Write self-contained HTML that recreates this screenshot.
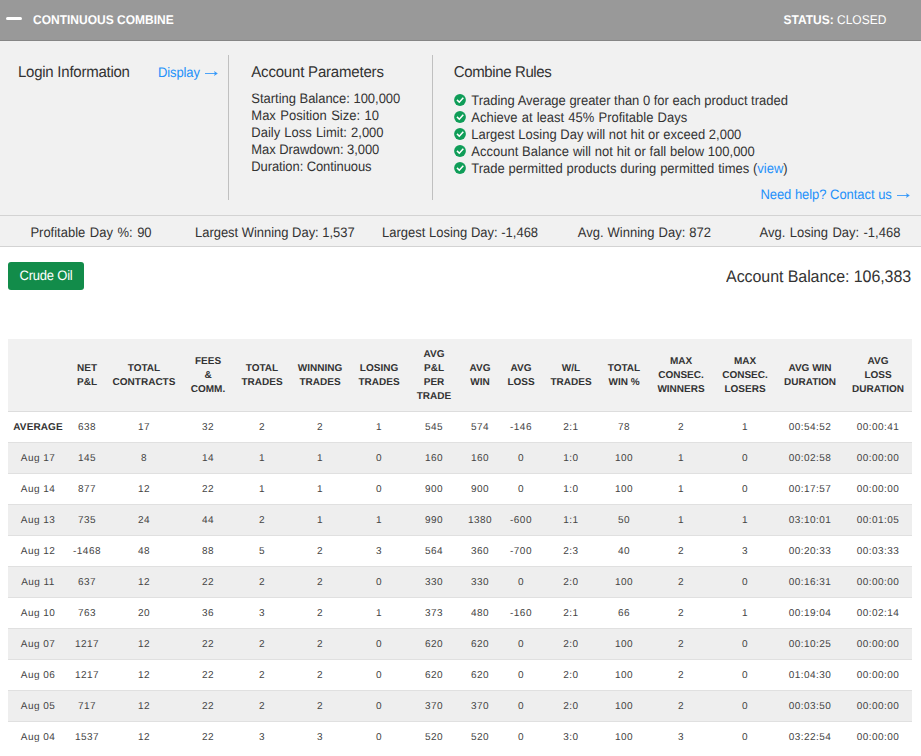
<!DOCTYPE html>
<html>
<head>
<meta charset="utf-8">
<style>
*{box-sizing:border-box;margin:0;padding:0}
html,body{width:921px;height:756px;overflow:hidden;background:#fff}
body{font-family:"Liberation Sans",sans-serif;color:#333;position:relative;font-size:13px;text-rendering:geometricPrecision}
.ln{position:absolute;white-space:nowrap;line-height:20px}
#hdr{position:absolute;left:0;top:0;width:921px;height:41px;background:#999;border-bottom:1px solid #868686}
#minus{position:absolute;left:6px;top:16.7px;width:16.4px;height:3.4px;background:#fff;border-radius:1.7px}
#info{position:absolute;left:0;top:41px;width:921px;height:206px;background:#f1f1f1;border-bottom:1px solid #d3d3d3}
#sep{position:absolute;left:0;top:215px;width:921px;height:1px;background:#d3d3d3}
.vline{position:absolute;top:55px;width:1px;height:145px;background:#c0c0c0}
.chk{position:absolute;left:454px;width:12px;height:12px}
.arr{position:absolute}
#btn{position:absolute;left:8px;top:262px;width:76px;height:28px;background:#128c4a;border-radius:3px}
table{position:absolute;left:8px;top:339px;width:904px;border-collapse:collapse;table-layout:fixed}
th{font-size:10px;font-weight:bold;line-height:14px;letter-spacing:0px;color:#333;text-align:center;vertical-align:middle;background:#f1f1f1;height:72px;padding:2px 0 0;border-bottom:1px solid #ddd}
td{font-size:10px;letter-spacing:0.45px;color:#444;text-align:center;vertical-align:middle;height:31px;padding:2px 0 0;border-bottom:1px solid #e0e0e0;white-space:nowrap;line-height:14px}
tr.g td{background:#eee}

td.b{font-weight:bold;font-size:10px;letter-spacing:.1px;color:#333}
tr:last-child td{border-bottom:0}
</style>
</head>
<body>
<div id="hdr"><div id="minus"></div></div>
<div id="info"></div><div id="sep"></div>
<div class="vline" style="left:228px"></div><div class="vline" style="left:432px"></div>
<div id="btn"></div>
<div id="title" class="ln" style="left:33.00px;top:9.84px;font-size:12px;font-weight:bold;color:#fff;letter-spacing:0.000px;word-spacing:0.000px;transform:scaleY(1.06);transform-origin:0 14.16px">CONTINUOUS COMBINE</div>
<div id="status" class="ln" style="left:783.45px;top:9.84px;font-size:12px;font-weight:normal;color:#fff;letter-spacing:0.000px;word-spacing:0.000px;transform:scaleY(1.06);transform-origin:0 14.16px"><b>STATUS:</b> CLOSED</div>
<div id="login" class="ln" style="left:18.00px;top:62.80px;font-size:15px;font-weight:normal;color:#333;letter-spacing:-0.250px;word-spacing:0.000px;transform:scaleY(1.04);transform-origin:0 15.20px">Login Information</div>
<div id="display" class="ln" style="left:158.00px;top:62.50px;font-size:13px;font-weight:normal;color:#2390fa;letter-spacing:-0.117px;word-spacing:0.000px;transform:scaleY(1.06);transform-origin:0 14.50px">Display</div>
<div id="ap" class="ln" style="left:251.30px;top:62.80px;font-size:15px;font-weight:normal;color:#333;letter-spacing:-0.194px;word-spacing:0.000px;transform:scaleY(1.04);transform-origin:0 15.20px">Account Parameters</div>
<div id="ap1" class="ln" style="left:251.30px;top:88.50px;font-size:13px;font-weight:normal;color:#333;letter-spacing:-0.025px;word-spacing:0.000px;transform:scaleY(1.06);transform-origin:0 14.50px">Starting Balance: 100,000</div>
<div id="ap2" class="ln" style="left:251.30px;top:105.50px;font-size:13px;font-weight:normal;color:#333;letter-spacing:0.000px;word-spacing:0.900px;transform:scaleY(1.06);transform-origin:0 14.50px">Max Position Size: 10</div>
<div id="ap3" class="ln" style="left:251.30px;top:122.50px;font-size:13px;font-weight:normal;color:#333;letter-spacing:0.000px;word-spacing:0.500px;transform:scaleY(1.06);transform-origin:0 14.50px">Daily Loss Limit: 2,000</div>
<div id="ap4" class="ln" style="left:251.30px;top:139.50px;font-size:13px;font-weight:normal;color:#333;letter-spacing:-0.072px;word-spacing:0.000px;transform:scaleY(1.06);transform-origin:0 14.50px">Max Drawdown: 3,000</div>
<div id="ap5" class="ln" style="left:251.30px;top:156.50px;font-size:13px;font-weight:normal;color:#333;letter-spacing:-0.100px;word-spacing:0.000px;transform:scaleY(1.06);transform-origin:0 14.50px">Duration: Continuous</div>
<div id="cr" class="ln" style="left:453.80px;top:62.80px;font-size:15px;font-weight:normal;color:#333;letter-spacing:-0.383px;word-spacing:0.000px;transform:scaleY(1.04);transform-origin:0 15.20px">Combine Rules</div>
<div id="r1" class="ln" style="left:471.30px;top:90.50px;font-size:13px;font-weight:normal;color:#333;letter-spacing:-0.013px;word-spacing:0.000px;transform:scaleY(1.06);transform-origin:0 14.50px">Trading Average greater than 0 for each product traded</div>
<div id="r2" class="ln" style="left:471.30px;top:107.50px;font-size:13px;font-weight:normal;color:#333;letter-spacing:0.000px;word-spacing:0.540px;transform:scaleY(1.06);transform-origin:0 14.50px">Achieve at least 45% Profitable Days</div>
<div id="r3" class="ln" style="left:471.30px;top:124.50px;font-size:13px;font-weight:normal;color:#333;letter-spacing:0.000px;word-spacing:0.062px;transform:scaleY(1.06);transform-origin:0 14.50px">Largest Losing Day will not hit or exceed 2,000</div>
<div id="r4" class="ln" style="left:471.30px;top:141.50px;font-size:13px;font-weight:normal;color:#333;letter-spacing:0.000px;word-spacing:0.212px;transform:scaleY(1.06);transform-origin:0 14.50px">Account Balance will not hit or fall below 100,000</div>
<div id="r5" class="ln" style="left:471.30px;top:158.50px;font-size:13px;font-weight:normal;color:#333;letter-spacing:0.000px;word-spacing:0.183px;transform:scaleY(1.06);transform-origin:0 14.50px">Trade permitted products during permitted times (<span style="color:#2390fa">view</span>)</div>
<div id="help" class="ln" style="left:760.40px;top:184.50px;font-size:13px;font-weight:normal;color:#2390fa;letter-spacing:-0.040px;word-spacing:0.000px;transform:scaleY(1.06);transform-origin:0 14.50px">Need help? Contact us</div>
<div id="s1" class="ln" style="left:30.40px;top:222.50px;font-size:13px;font-weight:normal;color:#333;letter-spacing:0.000px;word-spacing:0.900px;transform:scaleY(1.06);transform-origin:0 14.50px">Profitable Day %: 90</div>
<div id="s2" class="ln" style="left:195.00px;top:222.50px;font-size:13px;font-weight:normal;color:#333;letter-spacing:-0.030px;word-spacing:0.000px;transform:scaleY(1.06);transform-origin:0 14.50px">Largest Winning Day: 1,537</div>
<div id="s3" class="ln" style="left:382.00px;top:222.50px;font-size:13px;font-weight:normal;color:#333;letter-spacing:0.000px;word-spacing:0.000px;transform:scaleY(1.06);transform-origin:0 14.50px">Largest Losing Day: -1,468</div>
<div id="s4" class="ln" style="left:577.75px;top:222.50px;font-size:13px;font-weight:normal;color:#333;letter-spacing:0.000px;word-spacing:0.433px;transform:scaleY(1.06);transform-origin:0 14.50px">Avg. Winning Day: 872</div>
<div id="s5" class="ln" style="left:759.55px;top:222.50px;font-size:13px;font-weight:normal;color:#333;letter-spacing:0.000px;word-spacing:0.767px;transform:scaleY(1.06);transform-origin:0 14.50px">Avg. Losing Day: -1,468</div>
<div id="btnt" class="ln" style="left:19.60px;top:265.50px;font-size:13px;font-weight:normal;color:#fff;letter-spacing:-0.225px;word-spacing:0.000px;transform:scaleY(1.06);transform-origin:0 14.50px">Crude Oil</div>
<div id="bal" class="ln" style="left:726.05px;top:268.46px;font-size:16px;font-weight:normal;color:#333;letter-spacing:-0.074px;word-spacing:0.000px;transform:scaleY(1.05);transform-origin:0 15.54px">Account Balance: 106,383</div>
<svg class="chk" style="top:94px" viewBox="0 0 12 12"><circle cx="6" cy="6" r="5.9" fill="#0f9d58"/><path d="M3 5.9 L5.3 8.2 L9.3 3.8" fill="none" stroke="#fff" stroke-width="1.55"/></svg>
<svg class="chk" style="top:111px" viewBox="0 0 12 12"><circle cx="6" cy="6" r="5.9" fill="#0f9d58"/><path d="M3 5.9 L5.3 8.2 L9.3 3.8" fill="none" stroke="#fff" stroke-width="1.55"/></svg>
<svg class="chk" style="top:128px" viewBox="0 0 12 12"><circle cx="6" cy="6" r="5.9" fill="#0f9d58"/><path d="M3 5.9 L5.3 8.2 L9.3 3.8" fill="none" stroke="#fff" stroke-width="1.55"/></svg>
<svg class="chk" style="top:145px" viewBox="0 0 12 12"><circle cx="6" cy="6" r="5.9" fill="#0f9d58"/><path d="M3 5.9 L5.3 8.2 L9.3 3.8" fill="none" stroke="#fff" stroke-width="1.55"/></svg>
<svg class="chk" style="top:162px" viewBox="0 0 12 12"><circle cx="6" cy="6" r="5.9" fill="#0f9d58"/><path d="M3 5.9 L5.3 8.2 L9.3 3.8" fill="none" stroke="#fff" stroke-width="1.55"/></svg>
<svg class="arr" style="left:205.4px;top:70px" width="14" height="7" viewBox="0 0 14 7"><path d="M0 3.5H10.5" stroke="#2390fa" stroke-width="1" stroke-opacity=".8" fill="none"/><path d="M9 0.9 L12.8 3.5 L9 6.1 L9.9 3.5Z" fill="#2390fa" fill-opacity=".9"/></svg>
<svg class="arr" style="left:897.2px;top:192px" width="14" height="7" viewBox="0 0 14 7"><path d="M0 3.5H10.5" stroke="#2390fa" stroke-width="1" stroke-opacity=".8" fill="none"/><path d="M9 0.9 L12.8 3.5 L9 6.1 L9.9 3.5Z" fill="#2390fa" fill-opacity=".9"/></svg>
<table>
<colgroup><col style="width:60px"><col style="width:38px"><col style="width:76px"><col style="width:52px"><col style="width:56px"><col style="width:60px"><col style="width:58px"><col style="width:52px"><col style="width:40px"><col style="width:42px"><col style="width:58px"><col style="width:48px"><col style="width:66px"><col style="width:62px"><col style="width:68px"><col style="width:68px"></colgroup>
<tr><th></th><th>NET<br>P&amp;L</th><th>TOTAL<br>CONTRACTS</th><th>FEES<br>&amp;<br>COMM.</th><th>TOTAL<br>TRADES</th><th>WINNING<br>TRADES</th><th>LOSING<br>TRADES</th><th>AVG<br>P&amp;L<br>PER<br>TRADE</th><th>AVG<br>WIN</th><th>AVG<br>LOSS</th><th>W/L<br>TRADES</th><th>TOTAL<br>WIN %</th><th>MAX<br>CONSEC.<br>WINNERS</th><th>MAX<br>CONSEC.<br>LOSERS</th><th>AVG WIN<br>DURATION</th><th>AVG<br>LOSS<br>DURATION</th></tr>
<tr><td class="b">AVERAGE</td><td>638</td><td>17</td><td>32</td><td>2</td><td>2</td><td>1</td><td>545</td><td>574</td><td>-146</td><td>2:1</td><td>78</td><td>2</td><td>1</td><td>00:54:52</td><td>00:00:41</td></tr>
<tr class="g"><td>Aug 17</td><td>145</td><td>8</td><td>14</td><td>1</td><td>1</td><td>0</td><td>160</td><td>160</td><td>0</td><td>1:0</td><td>100</td><td>1</td><td>0</td><td>00:02:58</td><td>00:00:00</td></tr>
<tr><td>Aug 14</td><td>877</td><td>12</td><td>22</td><td>1</td><td>1</td><td>0</td><td>900</td><td>900</td><td>0</td><td>1:0</td><td>100</td><td>1</td><td>0</td><td>00:17:57</td><td>00:00:00</td></tr>
<tr class="g"><td>Aug 13</td><td>735</td><td>24</td><td>44</td><td>2</td><td>1</td><td>1</td><td>990</td><td>1380</td><td>-600</td><td>1:1</td><td>50</td><td>1</td><td>1</td><td>03:10:01</td><td>00:01:05</td></tr>
<tr><td>Aug 12</td><td>-1468</td><td>48</td><td>88</td><td>5</td><td>2</td><td>3</td><td>564</td><td>360</td><td>-700</td><td>2:3</td><td>40</td><td>2</td><td>3</td><td>00:20:33</td><td>00:03:33</td></tr>
<tr class="g"><td>Aug 11</td><td>637</td><td>12</td><td>22</td><td>2</td><td>2</td><td>0</td><td>330</td><td>330</td><td>0</td><td>2:0</td><td>100</td><td>2</td><td>0</td><td>00:16:31</td><td>00:00:00</td></tr>
<tr><td>Aug 10</td><td>763</td><td>20</td><td>36</td><td>3</td><td>2</td><td>1</td><td>373</td><td>480</td><td>-160</td><td>2:1</td><td>66</td><td>2</td><td>1</td><td>00:19:04</td><td>00:02:14</td></tr>
<tr class="g"><td>Aug 07</td><td>1217</td><td>12</td><td>22</td><td>2</td><td>2</td><td>0</td><td>620</td><td>620</td><td>0</td><td>2:0</td><td>100</td><td>2</td><td>0</td><td>00:10:25</td><td>00:00:00</td></tr>
<tr><td>Aug 06</td><td>1217</td><td>12</td><td>22</td><td>2</td><td>2</td><td>0</td><td>620</td><td>620</td><td>0</td><td>2:0</td><td>100</td><td>2</td><td>0</td><td>01:04:30</td><td>00:00:00</td></tr>
<tr class="g"><td>Aug 05</td><td>717</td><td>12</td><td>22</td><td>2</td><td>2</td><td>0</td><td>370</td><td>370</td><td>0</td><td>2:0</td><td>100</td><td>2</td><td>0</td><td>00:03:50</td><td>00:00:00</td></tr>
<tr><td>Aug 04</td><td>1537</td><td>12</td><td>22</td><td>3</td><td>3</td><td>0</td><td>520</td><td>520</td><td>0</td><td>3:0</td><td>100</td><td>3</td><td>0</td><td>03:22:54</td><td>00:00:00</td></tr>
</table>
</body>
</html>
